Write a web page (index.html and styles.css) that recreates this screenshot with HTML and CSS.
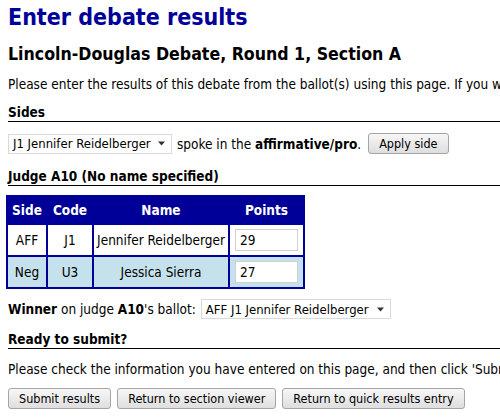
FILE: index.html
```html
<!DOCTYPE html>
<html>
<head>
<meta charset="utf-8">
<link rel="stylesheet" href="styles.css">
</head>
<body>
<h1 class="title">Enter debate results</h1>
<h2 class="subtitle">Lincoln-Douglas Debate, Round 1, Section A</h2>
<p class="text intro">Please enter the results of this debate from the ballot(s) using this page. If you want to change the competitors, use the section viewer.</p>
<h3 class="section sec-sides">Sides</h3>
<div class="line sides">
  <span class="select sel-side">J1 Jennifer Reidelberger <svg class="arrow" width="8" height="5" viewBox="0 0 8 5"><path d="M0 0.5H7L3.5 4.5Z" fill="#333"/></svg></span>
  <span>spoke in the <b>affirmative/pro</b>.</span>
  <span class="btn btn-side">Apply side</span>
</div>
<h3 class="section sec-judge">Judge A10 (No name specified)</h3>
<table class="results">
  <tr><th class="c-side">Side</th><th class="c-code">Code</th><th class="c-name">Name</th><th class="c-pts">Points</th></tr>
  <tr class="odd"><td>AFF</td><td>J1</td><td>Jennifer Reidelberger</td><td class="pts"><span class="input">29</span></td></tr>
  <tr class="even"><td>Neg</td><td>U3</td><td>Jessica Sierra</td><td class="pts"><span class="input">27</span></td></tr>
</table>
<div class="line winner">
  <span><b>Winner</b> on judge <b>A10</b>'s ballot:</span>
  <span class="select sel-win">AFF J1 Jennifer Reidelberger <svg class="arrow" width="8" height="5" viewBox="0 0 8 5"><path d="M0 0.5H7L3.5 4.5Z" fill="#333"/></svg></span>
</div>
<h3 class="section sec-ready">Ready to submit?</h3>
<p class="text check">Please check the information you have entered on this page, and then click 'Submit results'.</p>
<div class="line buttons">
  <span class="btn">Submit results</span>
  <span class="btn">Return to section viewer</span>
  <span class="btn">Return to quick results entry</span>
</div>
</body>
</html>
```
FILE: styles.css
```css
html, body { margin: 0; padding: 0; background: #fff; overflow: hidden; }
body {
  padding: 0 0 0 8px;
  width: 1000px;
  font-family: "DejaVu Sans", sans-serif;
  font-stretch: condensed;
  font-size: 13.5px;
  color: #000;
}
.title {
  margin: 0;
  padding-top: 3px;
  font-size: 23px;
  line-height: 28px;
  font-weight: bold;
  color: #000099;
}
.subtitle {
  margin: 12px 0 0;
  font-size: 17.6px;
  line-height: 22px;
  font-weight: bold;
}
.text {
  margin: 0;
  line-height: 16px;
  white-space: nowrap;
}
.intro { margin-top: 11px; }
.check { margin-top: 12px; }
.section {
  margin: 0;
  font-size: 13.5px;
  line-height: 17px;
  font-weight: bold;
  border-bottom: 1px solid #000;
}
.sec-sides { margin-top: 12px; }
.sec-judge { margin-top: 14px; }
.sec-ready { margin-top: 12px; }
.line {
  display: flex;
  align-items: center;
  gap: 5px;
  white-space: nowrap;
}
.sides { margin-top: 11px; }
.select {
  display: inline-flex;
  align-items: center;
  justify-content: space-between;
  box-sizing: border-box;
  height: 20px;
  padding: 0 5px 0 4px;
  border: 1px solid #dadada;
  background: #fff;
  font-size: 13px;
}
.sel-side { width: 164px; }
.sel-win { width: 190px; }
.btn {
  display: inline-flex;
  align-items: center;
  justify-content: center;
  box-sizing: border-box;
  height: 21px;
  padding: 0 10px;
  border: 1px solid #a5a5a5;
  border-radius: 3px;
  background: linear-gradient(#f7f7f7, #dedede);
  font-size: 12.5px;
}
.btn-side { margin-left: 2px; }
.results {
  margin: 9px 0 0 -2px;
  border-collapse: separate;
  border-spacing: 2px;
  background: #000099;
  text-align: center;
  table-layout: fixed;
}
.results th {
  color: #fff;
  font-size: 13.5px;
  height: 26px;
  padding: 0;
}
.c-side { width: 38px; }
.c-code { width: 44px; }
.c-name { width: 134px; }
.c-pts { width: 73px; }
.results td {
  height: 30px;
  padding: 0;
}
.results .odd td { background: #fff; }
.results .even td { background: #c5e2ec; }
.results td.pts { padding: 0 5px; }
.input {
  display: flex;
  align-items: center;
  box-sizing: border-box;
  height: 22px;
  padding-left: 4px;
  border: 1px solid #d0d0d0;
  background: #fff;
  text-align: left;
}
.winner { margin-top: 10px; }
.buttons { margin-top: 11px; gap: 6px; }
```
